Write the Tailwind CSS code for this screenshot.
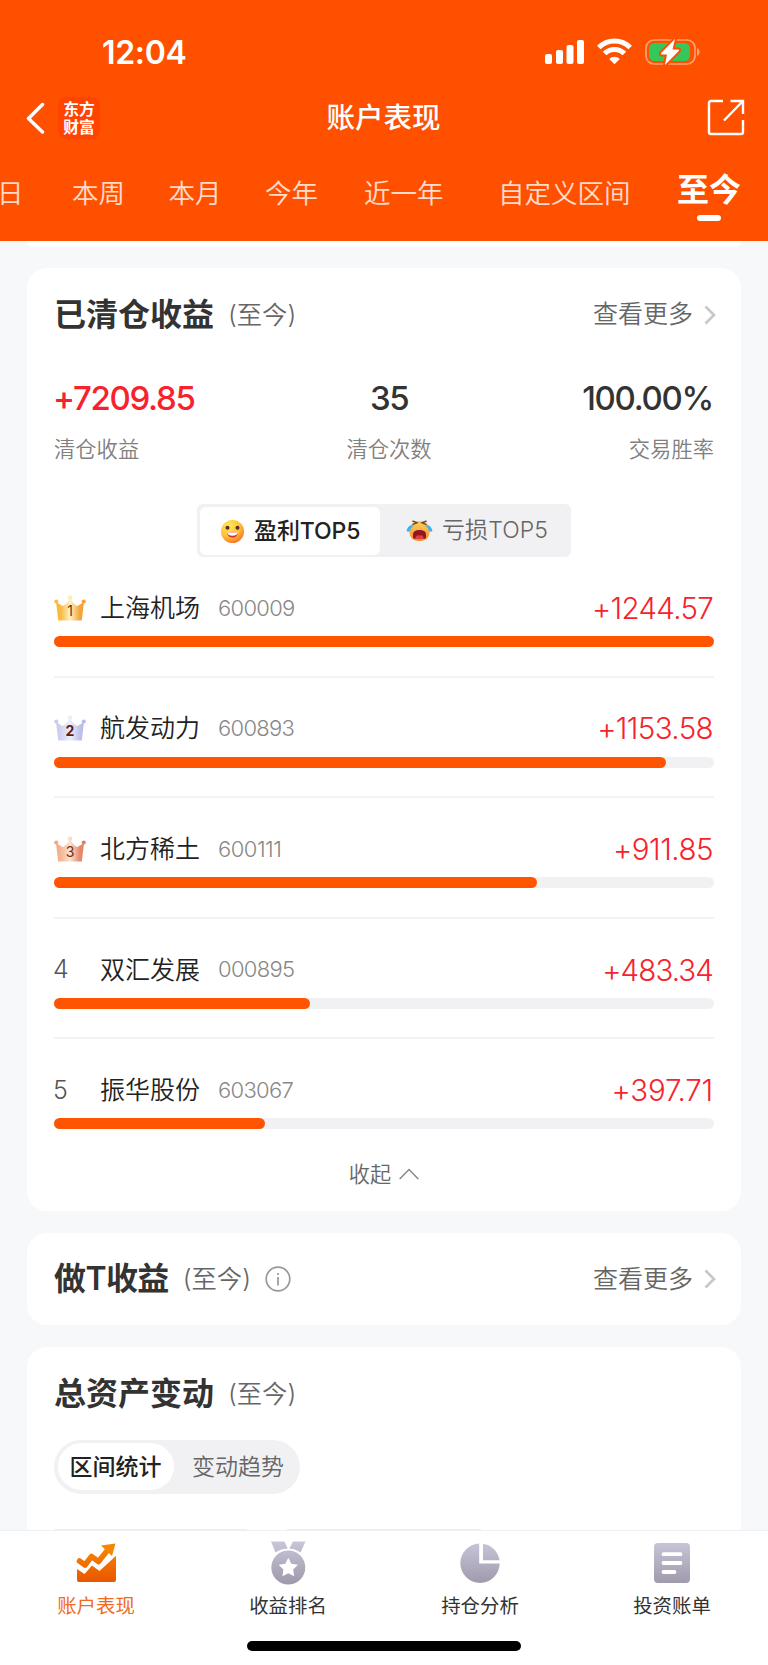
<!DOCTYPE html>
<html lang="zh-CN">
<head>
<meta charset="utf-8">
<title>账户表现</title>
<script src="https://cdn.jsdelivr.net/npm/@tailwindcss/browser@4"></script>
</head>
<body class="w-[768px] h-[1665px] overflow-hidden bg-[#f7f8fa] text-[#333] flex flex-col font-['Inter','Noto_Sans_CJK_SC',sans-serif]">

<header class="h-[241px] shrink-0 bg-[#ff5000] text-white flex flex-col">
  <div class="h-[90px] flex items-start justify-between pl-[102px] pr-[67px] pt-[36px]">
    <div class="text-[32px] leading-[33px] font-semibold tracking-[-0.3px]">12:04</div>
    <div class="flex items-center h-[32px]">
      <svg width="156" height="28" viewBox="0 0 156 28" fill="none">
        <g fill="#fff"><rect x="0" y="16" width="7" height="10" rx="2"/><rect x="11" y="12" width="7" height="14" rx="2"/><rect x="21.500" y="7" width="7" height="19" rx="2"/><rect x="32" y="2" width="7" height="24" rx="2"/></g>
        <g stroke="#fff" stroke-width="5"><path d="M53.800 9.600a22 22 0 0 1 31.400 0"/><path d="M59.600 15.600a14 14 0 0 1 19.800 0"/></g>
        <path d="M69.500 26.200l-5.300-5.300a7.600 7.600 0 0 1 10.600 0z" fill="#fff"/>
        <rect x="101" y="2" width="49" height="24" rx="8" stroke="#ffa173" stroke-width="1.700"/>
        <path d="M152 10c3.500 1.500 3.500 6.500 0 8z" fill="#ffa173"/>
        <rect x="104" y="5" width="41" height="18" rx="5.500" fill="#34c759"/>
        <path d="M130 1L116 15.200q-.5 1.300 1 1.300h5L120 27l14-14.200q.7-1.400-1-1.400h-5.500z" fill="#fff" stroke="#ff5000" stroke-width="4" stroke-linejoin="round"/>
        <path d="M130 1L116 15.200q-.5 1.300 1 1.300h5L120 27l14-14.200q.7-1.400-1-1.400h-5.500z" fill="#fff"/>
      </svg>
    </div>
  </div>
  <div class="h-[56px] grid grid-cols-3 items-center pl-[26px] pr-[23px]">
    <div class="flex items-center gap-[13px]">
      <svg width="19" height="32" viewBox="0 0 19 32" fill="none" stroke="#fff" stroke-width="3.400" stroke-linecap="round" stroke-linejoin="round"><path d="M16.500 2.500L2.500 16.500l14 13.500"/></svg>
      <div class="w-[42px] h-[42px] rounded-[8px] bg-[#ff4300] flex flex-col items-center justify-center text-[15.800px] leading-[18px] font-bold font-['Noto_Sans_CJK_SC',sans-serif]"><span>东方</span><span>财富</span></div>
    </div>
    <div class="text-center text-[28.500px] leading-[36px] font-medium whitespace-nowrap pr-[4px]">账户表现</div>
    <div class="flex justify-end">
      <svg width="38" height="38" viewBox="0 0 38 38" fill="none" stroke="#fff" stroke-width="2.400" stroke-linejoin="round"><path d="M16 2H4Q2 2 2 4v29q0 2 2 2h30q2 0 2-2V21"/><path d="M23.500 2H36v13M36 2L17 21.500" stroke-linejoin="miter"/></svg>
    </div>
  </div>
  <nav class="h-[95px] relative text-[26.500px] leading-[32px] text-white/80">
    <div class="flex h-[94px] items-center whitespace-nowrap -ml-[3px] font-[350]">
      <span class="w-[75px]">日</span>
      <span class="w-[96.500px]">本周</span>
      <span class="w-[96.500px]">本月</span>
      <span class="w-[99px]">今年</span>
      <span class="w-[134px]">近一年</span>
      <span class="w-[179px]">自定义区间</span>
      <span class="text-white text-[32px] font-bold pb-[7px]">至今</span>
    </div>
    <i class="absolute left-[697px] top-[69px] w-[24px] h-[6px] rounded-full bg-white"></i>
  </nav>
</header>

<main class="h-[1289px] shrink-0 overflow-hidden px-[27px] flex flex-col">
  <div class="h-[6px] shrink-0 bg-white rounded-b-[20px]"></div>

  <section class="mt-[21px] h-[943px] shrink-0 bg-white rounded-[20px] px-[27px]">
    <div class="h-[94px] flex items-center justify-between">
      <div class="flex items-center gap-[14px]"><h2 class="text-[32px] font-bold leading-[40px]">已清仓收益</h2><span class="text-[25.300px] font-[350] text-[#666]">(至今)</span></div>
      <div class="flex items-center text-[25px] font-[350] text-[#666] gap-[11px] -mr-[2px]">查看更多<svg width="12" height="20" viewBox="0 0 12 20" fill="none" stroke="#c8c8c8" stroke-width="2.700"><path d="M1.500 1.500L10 10l-8.500 8.500"/></svg></div>
    </div>
    <div class="h-[142px] flex justify-between pt-[16px]">
      <div class="w-[220px]"><div class="-ml-[1px] text-[33px] leading-[40px] font-medium tracking-[-1.300px] text-[#f6232c]">+7209.85</div><div class="mt-[16px] text-[21.300px] leading-[31px] font-[350] text-[#808080]">清仓收益</div></div>
      <div class="w-[220px] text-center pl-[10px]"><div class="text-[33px] leading-[40px] font-medium tracking-[-1.500px]">35</div><div class="mt-[16px] text-[21.300px] leading-[31px] font-[350] text-[#808080]">清仓次数</div></div>
      <div class="w-[220px] text-right"><div class="pr-[1px] text-[33px] leading-[40px] font-medium tracking-[-1.300px]">100.00%</div><div class="mt-[16px] text-[21.300px] leading-[31px] font-[350] text-[#808080]">交易胜率</div></div>
    </div>
    <div class="w-[374px] h-[53px] mx-auto rounded-[6px] bg-[#f1f1f4] p-[3px] flex text-[23px]">
      <div class="w-[180px] h-[48px] bg-white rounded-[6px] flex items-center pl-[20px] gap-[9px] font-medium text-[#222] tracking-[-0.100px] whitespace-nowrap">
        <svg width="25" height="25" viewBox="0 0 25 25"><defs><radialGradient id="smile" cx=".35" cy=".25" r=".85"><stop stop-color="#ffe85c"/><stop offset=".55" stop-color="#ffc233"/><stop offset="1" stop-color="#f3662f"/></radialGradient></defs><circle cx="12.500" cy="12.500" r="11.500" fill="url(#smile)"/><circle cx="7.500" cy="8.800" r="2" fill="#5a2e22"/><circle cx="17.500" cy="8.800" r="2" fill="#5a2e22"/><path d="M7 13q5.500 1 11 0-.5 5.500-5.500 5.500T7 13z" fill="#d52d35"/><path d="M7 13q5.500 1 11 0-.5 3.700-5.500 3.700T7 13z" fill="#fff"/></svg>
        盈利TOP5</div>
      <div class="flex items-center pl-[26px] gap-[9px] font-[350] text-[#666] tracking-[0.100px] whitespace-nowrap">
        <svg width="27" height="25" viewBox="0 0 27 25"><defs><linearGradient id="cry" x2="0" y2="1"><stop stop-color="#ffd45a"/><stop offset="1" stop-color="#f58a32"/></linearGradient></defs><rect x="3.500" y="3" width="20" height="20" rx="8.500" fill="url(#cry)"/><path d="M6.500 3l4.500 1.800-4.500 1.800M20.500 3L16 4.800l4.500 1.800" fill="none" stroke="#7b4527" stroke-width="1.400"/><path d="M7 20v-3.500q0-4.500 6.500-4.500t6.500 4.500V20q-1 1-3 .5h-7q-2 .5-3-.5z" fill="#8f1720"/><path d="M9.500 20.500q0-4 4-3 4-1 4 3z" fill="#e83b45"/><path d="M8 7.500Q2 6 .5 13q1.500 1.500 3.500 0 1-4 4-5.500zM19 7.500Q25 6 26.500 13q-1.500 1.500-3.500 0-1-4-4-5.500z" fill="#3eb1ef"/></svg>
        亏损TOP5</div>
    </div>

    <svg width="0" height="0" class="absolute"><defs>
      <linearGradient id="gold" gradientUnits="userSpaceOnUse" x1="0" y1="0" x2="32" y2="0"><stop stop-color="#fbbd3e"/><stop offset=".22" stop-color="#f9bb40"/><stop offset=".5" stop-color="#fff2c8"/><stop offset=".8" stop-color="#f4a63a"/><stop offset="1" stop-color="#f3a037"/></linearGradient>
      <linearGradient id="silver" gradientUnits="userSpaceOnUse" x1="0" y1="0" x2="32" y2="0"><stop stop-color="#c6caec"/><stop offset=".22" stop-color="#cfd3ef"/><stop offset=".5" stop-color="#eef0fa"/><stop offset=".8" stop-color="#bfc3ea"/><stop offset="1" stop-color="#b3b7e6"/></linearGradient>
      <linearGradient id="bronze" gradientUnits="userSpaceOnUse" x1="0" y1="0" x2="32" y2="0"><stop stop-color="#f1a283"/><stop offset=".22" stop-color="#f4b795"/><stop offset=".5" stop-color="#fbe2d4"/><stop offset=".8" stop-color="#e88b6d"/><stop offset="1" stop-color="#e2785b"/></linearGradient>
      <g id="crown"><circle cx="16" cy="2.800" r="2.300"/><circle cx="2.300" cy="6.500" r="2.100"/><circle cx="29.700" cy="6.500" r="2.100"/><path d="M2 7L8.500 11Q12 10 16 3.500 20 10 23.500 11L30 7 27.800 25.500H4.200z"/></g>
    </defs></svg>

    <div class="mt-[30px]">
      <div class="h-[90.600px] border-b-2 border-[#f3f3f5] flex flex-col">
        <div class="h-[49px] shrink-0 flex items-center pb-[7px]">
          <svg class="shrink-0" width="32" height="27" viewBox="0 0 32 27"><use href="#crown" fill="url(#gold)"/><text x="16" y="21" text-anchor="middle" font-family="Inter" font-size="14" fill="#733016">1</text></svg>
          <span class="ml-[14px] w-[118px] pt-[1px] text-[25px] font-[350] text-[#222]">上海机场</span><span class="text-[22px] font-light text-[#888] tracking-[-0.700px]">600009</span>
          <span class="ml-auto mr-[1px] text-[29.500px] font-light text-[#f6232c] tracking-[-0.700px]">+1244.57</span>
        </div>
        <div class="h-[11px] shrink-0 rounded-full bg-[#f1f1f4]"><div class="h-full rounded-full bg-[#ff5500]" style="width:100%"></div></div>
      </div>
      <div class="h-[120.600px] border-b-2 border-[#f3f3f5] flex flex-col pt-[30px]">
        <div class="h-[49px] shrink-0 flex items-center pb-[7px]">
          <svg class="shrink-0" width="32" height="27" viewBox="0 0 32 27"><use href="#crown" fill="url(#silver)"/><text x="16" y="21" text-anchor="middle" font-family="Inter" font-size="14" font-weight="700" fill="#5a2119">2</text></svg>
          <span class="ml-[14px] w-[118px] pt-[1px] text-[25px] font-[350] text-[#222]">航发动力</span><span class="text-[22px] font-light text-[#888] tracking-[-0.700px]">600893</span>
          <span class="ml-auto mr-[1px] text-[29.500px] font-light text-[#f6232c] tracking-[-0.600px]">+1153.58</span>
        </div>
        <div class="h-[11px] shrink-0 rounded-full bg-[#f1f1f4]"><div class="h-full rounded-full bg-[#ff5500]" style="width:92.700%"></div></div>
      </div>
      <div class="h-[120.600px] border-b-2 border-[#f3f3f5] flex flex-col pt-[30px]">
        <div class="h-[49px] shrink-0 flex items-center pb-[7px]">
          <svg class="shrink-0" width="32" height="27" viewBox="0 0 32 27"><use href="#crown" fill="url(#bronze)"/><text x="16" y="21" text-anchor="middle" font-family="Inter" font-size="14" fill="#733016">3</text></svg>
          <span class="ml-[14px] w-[118px] pt-[1px] text-[25px] font-[350] text-[#222]">北方稀土</span><span class="text-[22px] font-light text-[#888] tracking-[-0.500px]">600111</span>
          <span class="ml-auto mr-[1px] text-[29.500px] font-light text-[#f6232c] tracking-[-0.500px]">+911.85</span>
        </div>
        <div class="h-[11px] shrink-0 rounded-full bg-[#f1f1f4]"><div class="h-full rounded-full bg-[#ff5500]" style="width:73.200%"></div></div>
      </div>
      <div class="h-[120.600px] border-b-2 border-[#f3f3f5] flex flex-col pt-[30px]">
        <div class="h-[49px] shrink-0 flex items-center pb-[7px]">
          <span class="-ml-[1px] w-[33px] text-[25px] font-light text-[#555]">4</span>
          <span class="ml-[14px] w-[118px] pt-[1px] text-[25px] font-[350] text-[#222]">双汇发展</span><span class="text-[22px] font-light text-[#888] tracking-[-0.700px]">000895</span>
          <span class="ml-auto mr-[1px] text-[29.500px] font-light text-[#f6232c] tracking-[-0.900px]">+483.34</span>
        </div>
        <div class="h-[11px] shrink-0 rounded-full bg-[#f1f1f4]"><div class="h-full rounded-full bg-[#ff5500]" style="width:38.800%"></div></div>
      </div>
      <div class="h-[90px] flex flex-col pt-[30px]">
        <div class="h-[49px] shrink-0 flex items-center pb-[7px]">
          <span class="-ml-[1px] w-[33px] text-[25px] font-light text-[#555]">5</span>
          <span class="ml-[14px] w-[118px] pt-[1px] text-[25px] font-[350] text-[#222]">振华股份</span><span class="text-[22px] font-light text-[#888] tracking-[-0.700px]">603067</span>
          <span class="ml-auto mr-[1px] text-[29.500px] font-light text-[#f6232c] tracking-[-0.200px]">+397.71</span>
        </div>
        <div class="h-[11px] shrink-0 rounded-full bg-[#f1f1f4]"><div class="h-full rounded-full bg-[#ff5500]" style="width:32%"></div></div>
      </div>
    </div>
    <div class="h-[91px] flex items-center justify-center gap-[8px] text-[21.200px] font-[350] text-[#666]">收起<svg class="mb-[2px]" width="20" height="12" viewBox="0 0 20 12" fill="none" stroke="#888" stroke-width="1.500"><path d="M.7 11L10 1.500l9.300 9.500"/></svg></div>
  </section>

  <section class="mt-[21.500px] h-[92.500px] shrink-0 bg-white rounded-[20px] px-[27px] pt-[1px] flex items-center justify-between">
    <div class="flex items-center gap-[14px]"><h2 class="text-[32px] font-bold leading-[40px] tracking-[-0.600px]">做<span class="font-semibold">T</span>收益</h2><span class="text-[25.300px] font-[350] text-[#666]">(至今)</span>
      <svg width="26" height="26" viewBox="0 0 26 26" fill="none" stroke="#999" stroke-width="1.700"><circle cx="13" cy="13" r="11.800"/><path d="M13 11v8.500M13 7v2"/></svg></div>
    <div class="flex items-center text-[25px] font-[350] text-[#666] gap-[11px] -mr-[2px]">查看更多<svg width="12" height="20" viewBox="0 0 12 20" fill="none" stroke="#c8c8c8" stroke-width="2.700"><path d="M1.500 1.500L10 10l-8.500 8.500"/></svg></div>
  </section>

  <section class="mt-[21.500px] h-[183.500px] shrink-0 bg-white rounded-t-[20px] px-[27px] flex flex-col">
    <div class="h-[93px] shrink-0 flex items-center gap-[14px] pt-[1px]"><h2 class="text-[32px] font-bold leading-[40px]">总资产变动</h2><span class="text-[25.300px] font-[350] text-[#666]">(至今)</span></div>
    <div class="w-[246px] h-[54px] shrink-0 rounded-full bg-[#f1f1f4] p-[3.500px] flex text-[23px] whitespace-nowrap">
      <div class="w-[116px] h-[47px] rounded-full bg-white flex items-center justify-center pt-[1px] font-medium text-[#222]">区间统计</div>
      <div class="flex-1 flex items-center justify-center pl-[6px] pt-[1px] font-[350] text-[#666]">变动趋势</div>
    </div>
    <div class="mt-auto flex gap-[40px]"><i class="w-[193px] h-[1px] bg-[#eeeef1]"></i><i class="w-[194px] h-[1px] bg-[#eeeef1]"></i></div>
  </section>
</main>

<footer class="h-[135px] shrink-0 bg-white border-t border-[#eff0f3] flex flex-col items-center">
  <svg width="0" height="0" class="absolute"><defs>
    <linearGradient id="cool" gradientUnits="userSpaceOnUse" x1="0" y1="0" x2="0" y2="44"><stop stop-color="#c9c6da"/><stop offset="1" stop-color="#9d99aa"/></linearGradient>
    <linearGradient id="hot" gradientUnits="userSpaceOnUse" x1="0" y1="3" x2="0" y2="42"><stop stop-color="#f98c00"/><stop offset="1" stop-color="#e95400"/></linearGradient>
  </defs></svg>
  <div class="w-full h-[100px] grid grid-cols-4 text-[19.400px] leading-[28px] text-[#333]">
    <div class="flex flex-col items-center pt-[10px] text-[#f26a1b]"><svg width="44" height="44" viewBox="0 0 44 44"><path d="M3 28l7.500 5 7.500-8.500 7.500 5.500L42 14.800V39q0 2-2 2H5q-2 0-2-2z" fill="url(#hot)"/><path d="M5.500 20l5.500 4L17.500 15.500l7 5L34.500 8" fill="none" stroke="url(#hot)" stroke-width="5.500" stroke-linecap="round" stroke-linejoin="round"/><path d="M27 4.500L41.500 2.500 38 15z" fill="#f78500"/></svg><span class="mt-[7px]">账户表现</span></div>
    <div class="flex flex-col items-center pt-[10px]"><svg width="44" height="44" viewBox="0 0 44 44" fill="url(#cool)"><path d="M5 .5H18.500l3.200 7Q14 8 9.500 11.500zM39.500 .5H27l-3.700 7Q30 8 34.500 11.500z"/><path fill-rule="evenodd" d="M22.300 9.500a17 17 0 1 0 0 34 17 17 0 0 0 0-34zm0 7.300l3 6 6.600 1-4.700 4.700 1 6.700-5.900-3-5.900 3 1-6.700-4.700-4.700 6.600-1z"/></svg><span class="mt-[7px]">收益排名</span></div>
    <div class="flex flex-col items-center pt-[10px]"><svg width="44" height="44" viewBox="0 0 44 44" fill="url(#cool)"><path d="M21.200 2.500A19.700 19.700 0 1 0 41.700 22.500H21.200z"/><path d="M25 2.700A19.700 19.700 0 0 1 41.500 19.200H25z"/></svg><span class="mt-[7px]">持仓分析</span></div>
    <div class="flex flex-col items-center pt-[10px]"><svg width="44" height="44" viewBox="0 0 44 44"><rect x="4" y="2" width="36" height="40" rx="4" fill="url(#cool)"/><path d="M13.500 13.200h17M13.500 22h17M13.500 31h11" stroke="#fff" stroke-width="3.800" stroke-linecap="round"/></svg><span class="mt-[7px]">投资账单</span></div>
  </div>
  <div class="mt-[10px] w-[274px] h-[10px] rounded-full bg-black"></div>
</footer>
</body>
</html>
